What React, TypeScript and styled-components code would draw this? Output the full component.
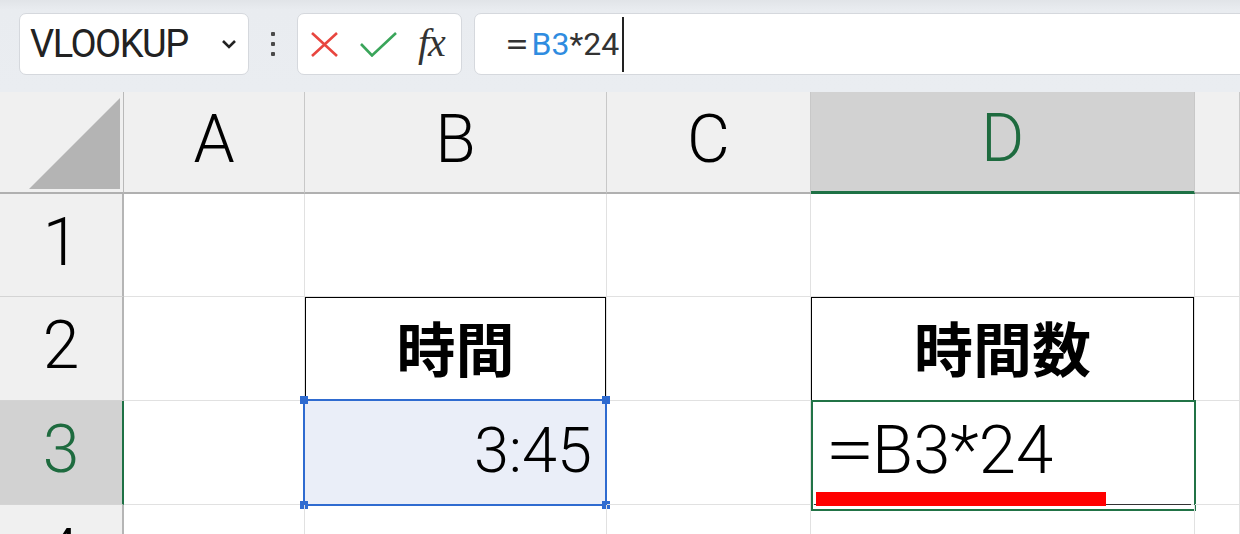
import React from "react";
import styled, { createGlobalStyle, css } from "styled-components";

const GlobalStyle = createGlobalStyle`
  html, body { margin: 0; padding: 0; background: #fff; overflow: hidden; }
  body { font-family: Roboto, "Noto Sans CJK JP", sans-serif; }
`;

const Page = styled.div`
  width: 1240px;
  height: 534px;
  overflow: hidden;
  display: flex;
  flex-direction: column;
`;

const Toolbar = styled.div`
  height: 92px;
  flex: none;
  box-sizing: border-box;
  display: flex;
  align-items: flex-start;
  padding: 13px 0 0 19px;
  background: linear-gradient(#e1e4e8 0px, #e9ecf0 10px, #eaedf1 100%);
`;

const Box = styled.div`
  height: 62px;
  box-sizing: border-box;
  background: #fff;
  border: 1px solid #d5d8dd;
  border-radius: 7px;
  display: flex;
  align-items: center;
`;

const NameBox = styled(Box)`
  width: 230px;
  padding: 0 11px 0 10px;
  justify-content: space-between;
`;

const NameText = styled.span`
  font-family: Roboto, sans-serif;
  font-size: 38px;
  letter-spacing: -1.5px;
  color: #222;
`;

const Dots = styled.div`
  width: 48px;
  height: 62px;
  display: flex;
  flex-direction: column;
  align-items: center;
  justify-content: center;
  gap: 6px;
`;

const Dot = styled.span`
  width: 4px;
  height: 4px;
  background: #4a4a4a;
  border-radius: 1px;
`;

const IconBox = styled(Box)`
  width: 165px;
  padding-left: 12px;
  gap: 21px;
`;

const Fx = styled.span`
  font-family: "Liberation Serif", serif;
  font-style: italic;
  font-weight: 400;
  font-size: 40px;
  color: #333;
  letter-spacing: -1px;
  margin-top: -4px;
`;

const FormulaBox = styled(Box)`
  flex: 1;
  margin-left: 12px;
  margin-right: -20px;
  padding-left: 30px;
  font-family: Roboto, sans-serif;
  font-size: 32px;
  color: #333;
`;

const Eq = styled.span<{ $gap: number }>`
  display: inline-block;
  transform: scaleX(1.35);
  transform-origin: left center;
  margin-right: ${(p) => p.$gap}px;
`;

const Ref = styled.span`
  color: #2f8ce0;
`;

const Caret = styled.span`
  display: inline-block;
  width: 2px;
  height: 55px;
  background: #222;
  margin-left: 3px;
`;

const Sheet = styled.div`
  display: grid;
  grid-template-columns: 124px 181px 302px 204px 384px 1fr;
  grid-template-rows: 102px 103px 104px 104px 104px;
  font-family: Roboto, "Noto Sans CJK JP", sans-serif;
  font-weight: 300;
  color: #000;
`;

const CornerCell = styled.div`
  box-sizing: border-box;
  background: #f0f0f0;
  border-right: 1px solid #b9b9b9;
  border-bottom: 2px solid #b0b0b0;
  display: flex;
  align-items: flex-end;
  justify-content: flex-end;
  padding: 0 3px 3px 0;
`;

const Triangle = styled.div`
  width: 91px;
  height: 91px;
  background: #b4b4b4;
  clip-path: polygon(100% 0, 100% 100%, 0 100%);
`;

const ColHeader = styled.div<{ $active?: boolean }>`
  box-sizing: border-box;
  background: ${(p) => (p.$active ? "#d2d2d2" : "#f0f0f0")};
  border-right: 1px solid #c8c8c8;
  border-bottom: ${(p) => (p.$active ? "3px solid #1e7145" : "2px solid #b0b0b0")};
  color: ${(p) => (p.$active ? "#1e6b3f" : "#000")};
  display: flex;
  align-items: center;
  justify-content: center;
  padding-bottom: 6px;
  font-size: 66px;
`;

const RowHeader = styled.div<{ $active?: boolean }>`
  box-sizing: border-box;
  background: ${(p) => (p.$active ? "#d2d2d2" : "#f0f0f0")};
  border-right: 2px solid ${(p) => (p.$active ? "#1e7145" : "#b5b5b5")};
  border-bottom: 1px solid #d4d4d4;
  color: ${(p) => (p.$active ? "#1e6b3f" : "#000")};
  display: flex;
  align-items: center;
  justify-content: center;
  padding-bottom: 6px;
  font-size: 66px;
`;

const Cell = styled.div<{ $align?: "left" | "center" | "right"; $boxed?: boolean; $selected?: boolean }>`
  position: relative;
  box-sizing: border-box;
  border-right: 1px solid #e1e1e1;
  border-bottom: 1px solid #e1e1e1;
  display: flex;
  align-items: center;
  padding: 0 14px 5px;
  justify-content: ${(p) =>
    p.$align === "right" ? "flex-end" : p.$align === "center" ? "center" : "flex-start"};
  ${(p) =>
    p.$boxed &&
    css`
      box-shadow: inset 1px 1px 0 #000, inset -1px 0 0 #000;
    `}
  ${(p) =>
    p.$selected &&
    css`
      background: #eaeef8;
    `}
`;

const HeadText = styled.span`
  font-family: "Noto Sans CJK JP", sans-serif;
  font-weight: 700;
  font-size: 59px;
  line-height: 1;
`;

const ValueText = styled.span<{ $size: number }>`
  font-size: ${(p) => p.$size}px;
  line-height: 1;
`;

const Selection = styled.div`
  position: absolute;
  top: -2px;
  left: -2px;
  right: -1px;
  bottom: -2px;
  border: 2px solid #2f6bd0;
  pointer-events: none;
`;

const Handle = styled.span<{ $v: "top" | "bottom"; $h: "left" | "right" }>`
  position: absolute;
  width: 8px;
  height: 8px;
  background: #2f6bd0;
  ${(p) => (p.$v === "top" ? "top: -5px;" : "bottom: -5px;")}
  ${(p) => (p.$h === "left" ? "left: -5px;" : "right: -5px;")}
`;

const ActiveFrame = styled.div`
  position: absolute;
  top: -1px;
  left: 0;
  right: -2px;
  bottom: -7px;
  border: 2px solid #217346;
  pointer-events: none;
`;

const EditLine = styled.div`
  position: absolute;
  left: 3px;
  right: 3px;
  bottom: -1px;
  height: 1px;
  background: #333;
`;

const RedMark = styled.div`
  position: absolute;
  left: 5px;
  width: 290px;
  bottom: -2px;
  height: 14px;
  background: #ff0000;
`;

const XIcon = () => (
  <svg width="29" height="25" viewBox="0 0 29 25">
    <path d="M2 1 L27 24 M27 1 L2 24" stroke="#e8463f" strokeWidth="2.6" fill="none" />
  </svg>
);

const CheckIcon = () => (
  <svg width="37" height="25" viewBox="0 0 37 25">
    <path d="M1 12 L12 23.5 L36 1" stroke="#3aa55a" strokeWidth="2.6" fill="none" />
  </svg>
);

const Chevron = () => (
  <svg width="16" height="10" viewBox="0 0 16 10">
    <path d="M2 2 L8 8 L14 2" stroke="#222" strokeWidth="2.6" fill="none" />
  </svg>
);

export default function App() {
  return (
    <Page>
      <GlobalStyle />
      <Toolbar>
        <NameBox>
          <NameText>VLOOKUP</NameText>
          <Chevron />
        </NameBox>
        <Dots>
          <Dot />
          <Dot />
          <Dot />
        </Dots>
        <IconBox>
          <XIcon />
          <CheckIcon />
          <Fx>fx</Fx>
        </IconBox>
        <FormulaBox>
          <Eq $gap={9}>=</Eq>
          <Ref>B3</Ref>
          <span>*24</span>
          <Caret />
        </FormulaBox>
      </Toolbar>
      <Sheet>
        <CornerCell>
          <Triangle />
        </CornerCell>
        <ColHeader>A</ColHeader>
        <ColHeader>B</ColHeader>
        <ColHeader>C</ColHeader>
        <ColHeader $active>D</ColHeader>
        <ColHeader />

        <RowHeader>1</RowHeader>
        <Cell />
        <Cell />
        <Cell />
        <Cell />
        <Cell />

        <RowHeader>2</RowHeader>
        <Cell />
        <Cell $align="center" $boxed>
          <HeadText>時間</HeadText>
        </Cell>
        <Cell />
        <Cell $align="center" $boxed>
          <HeadText>時間数</HeadText>
        </Cell>
        <Cell />

        <RowHeader $active>3</RowHeader>
        <Cell />
        <Cell $align="right" $selected>
          <ValueText $size={63}>3:45</ValueText>
          <Selection>
            <Handle $v="top" $h="left" />
            <Handle $v="top" $h="right" />
            <Handle $v="bottom" $h="left" />
            <Handle $v="bottom" $h="right" />
          </Selection>
        </Cell>
        <Cell />
        <Cell $align="left">
          <ValueText $size={67}>
            <Eq $gap={10}>=</Eq>B3*24
          </ValueText>
          <EditLine />
          <RedMark />
          <ActiveFrame />
        </Cell>
        <Cell />

        <RowHeader>4</RowHeader>
        <Cell />
        <Cell />
        <Cell />
        <Cell />
        <Cell />
      </Sheet>
    </Page>
  );
}
